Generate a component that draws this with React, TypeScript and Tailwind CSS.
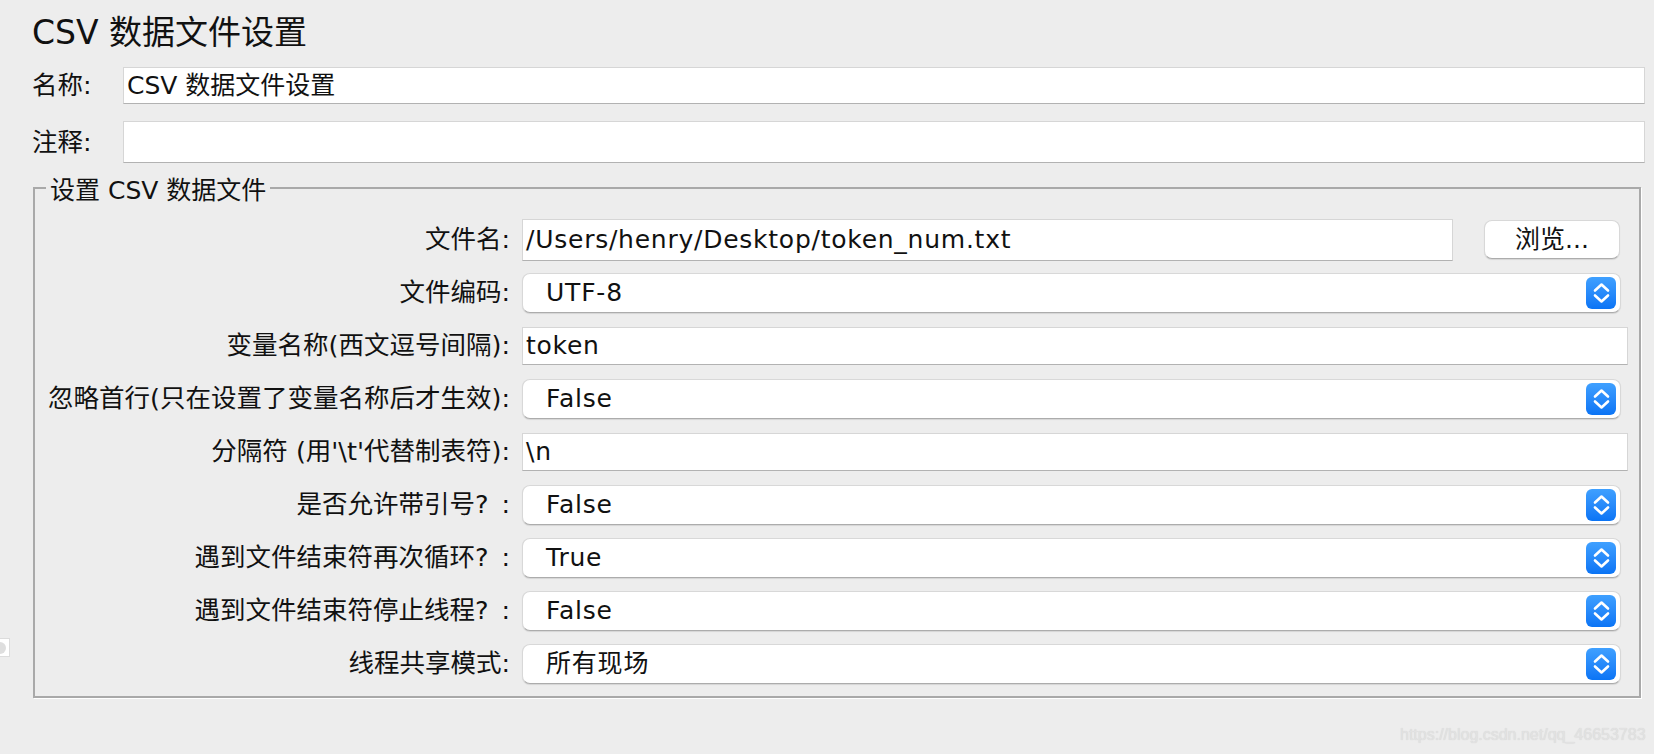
import React from "react";

const font = "font-['DejaVu_Sans','Noto_Sans_CJK_SC',sans-serif]";

function Stepper() {
  return (
    <div className="flex h-[32px] w-[30px] shrink-0 items-center justify-center rounded-[6px] bg-linear-to-b from-[#3fa0ff] to-[#0a74f5]">
      <svg width="30" height="32" viewBox="0 0 30 32" fill="none" stroke="white" strokeWidth="2.6" strokeLinecap="round" strokeLinejoin="round">
        <path d="M9 13.5 15.5 7.5 22 13.5" />
        <path d="M9 18.5 15.5 24.5 22 18.5" />
      </svg>
    </div>
  );
}

function Select({ value }: { value: string }) {
  return (
    <div className="mr-[7px] flex h-[40px] flex-1 items-center rounded-[8px] border border-[#d8d8d8] border-b-[#acacac] bg-white pl-[23px] pr-[4px] shadow-[0_1px_1px_rgba(0,0,0,0.1)]">
      <span className="flex-1 text-[25px] tracking-[0.8px]">{value}</span>
      <Stepper />
    </div>
  );
}

function TextField({ value, className = "" }: { value: string; className?: string }) {
  return (
    <div className={`flex h-[38px] items-center border border-[#d6d6d6] border-b-[#b2b2b2] bg-white pl-[3px] text-[25px] ${className}`}>
      {value}
    </div>
  );
}

const rows: { label: string; kind: "file" | "select" | "text"; value: string }[] = [
  { label: "文件名:", kind: "file", value: "/Users/henry/Desktop/token_num.txt" },
  { label: "文件编码:", kind: "select", value: "UTF-8" },
  { label: "变量名称(西文逗号间隔):", kind: "text", value: "token" },
  { label: "忽略首行(只在设置了变量名称后才生效):", kind: "select", value: "False" },
  { label: "分隔符 (用'\\t'代替制表符):", kind: "text", value: "\\n" },
  { label: "是否允许带引号?\u2002:", kind: "select", value: "False" },
  { label: "遇到文件结束符再次循环?\u2002:", kind: "select", value: "True" },
  { label: "遇到文件结束符停止线程?\u2002:", kind: "select", value: "False" },
  { label: "线程共享模式:", kind: "select", value: "所有现场" },
];

export default function App() {
  return (
    <div className={`relative h-[754px] w-full overflow-hidden bg-[#ededed] text-[#111] ${font}`}>
      <div className="pl-[32px] pr-[9px] pt-[13px]">
        <h1 className="text-[33px] leading-[40px]">CSV 数据文件设置</h1>

        {/* 名称 / 注释 */}
        <div className="mt-[14px] flex h-[37px] items-center">
          <span className="w-[91px] text-[25.5px]">名称:</span>
          <TextField value="CSV 数据文件设置" className="h-full flex-1" />
        </div>
        <div className="mt-[17px] flex h-[42px] items-center">
          <span className="w-[91px] text-[25.5px]">注释:</span>
          <TextField value="" className="h-full flex-1" />
        </div>

        {/* 设置 CSV 数据文件 */}
        <fieldset className="mr-[4px] ml-[1px] mt-[7px] border-2 border-[#a9a9a9] pb-[6px] pt-[7px] shadow-[1px_1px_0_#fff]">
          <legend className="ml-[11px] px-[4px] pt-[6px] text-[25px] leading-[30px]">设置 CSV 数据文件</legend>
          {rows.map((r) => (
            <div key={r.label} className="flex h-[53px] items-center pr-[11px]">
              <div className="w-[475px] shrink-0 whitespace-nowrap text-right text-[25.5px]">{r.label}</div>
              <div className="ml-[12px] flex h-full flex-1 items-center">
                {r.kind === "file" && (
                  <>
                    <TextField value={r.value} className="h-[42px] flex-1 tracking-[0.75px]" />
                    <button className="ml-[31px] mr-[8px] flex h-[39px] w-[136px] items-center justify-center rounded-[8px] border border-[#d8d8d8] border-b-[#acacac] bg-white text-[25px] shadow-[0_1px_1px_rgba(0,0,0,0.1)]">
                      浏览...
                    </button>
                  </>
                )}
                {r.kind === "select" && <Select value={r.value} />}
                {r.kind === "text" && <TextField value={r.value} className="h-[37px] flex-1 tracking-[0.75px]" />}
              </div>
            </div>
          ))}
        </fieldset>
      </div>

      {/* splitter handle fragment at left edge */}
      <div className="absolute left-0 top-[638px] flex h-[19px] w-[10px] items-center overflow-hidden border border-l-0 border-[#dcdcdc] bg-white">
        <div className="-ml-[6px] h-[12px] w-[12px] rounded-full bg-[#dedede]" />
      </div>

      {/* watermark */}
      <div className="absolute left-[1400px] top-[725px] font-['Liberation_Sans',Arial,sans-serif] text-[16px] leading-[20px] text-[#e2e2e2] [text-shadow:0_0_1px_#cfcfcf]">
        https://blog.csdn.net/qq_46653783
      </div>
    </div>
  );
}
